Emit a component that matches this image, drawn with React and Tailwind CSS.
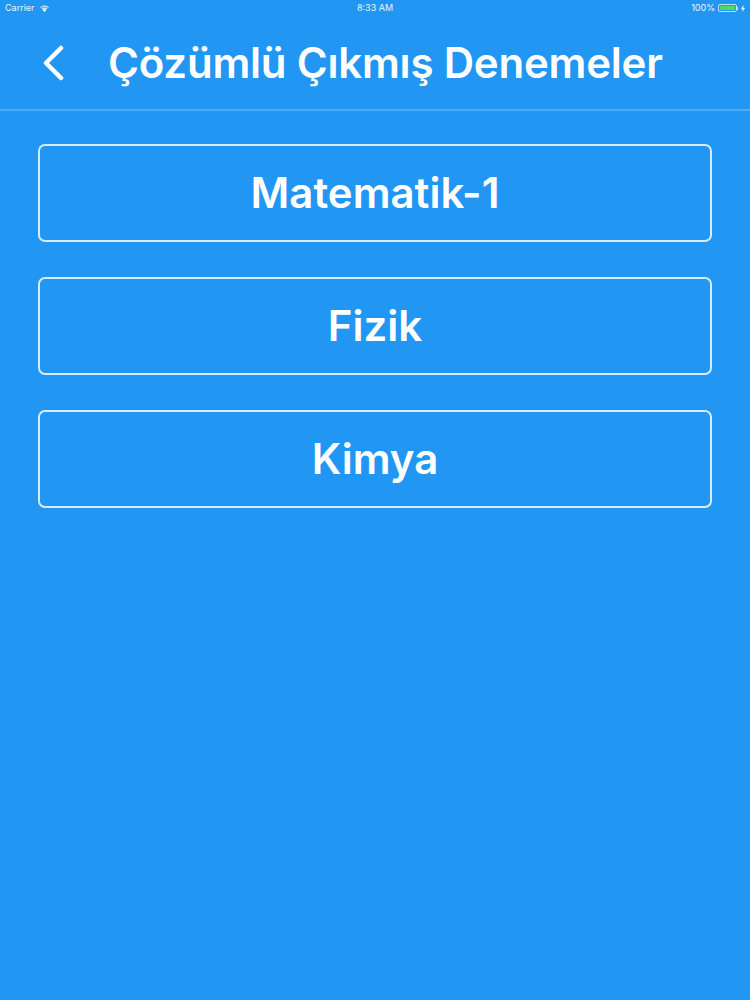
import React from "react";

const subjects = ["Matematik-1", "Fizik", "Kimya"];

function StatusBar() {
  return (
    <div className="relative flex h-[16px] items-center justify-between px-[5px] text-[9px] text-white/90">
      <div className="flex items-center gap-[4px]">
        <span>Carrier</span>
        <svg width="11" height="8" viewBox="0 0 11 8" fill="white">
          <path d="M5.5 8 L3.6 5.9 A2.8 2.8 0 0 1 7.4 5.9 Z" />
          <path d="M2.6 4.8 A4.3 4.3 0 0 1 8.4 4.8 L7.7 5.5 A3.3 3.3 0 0 0 3.3 5.5 Z" />
          <path d="M1.2 3.3 A6.3 6.3 0 0 1 9.8 3.3 L9.1 4.0 A5.3 5.3 0 0 0 1.9 4.0 Z" />
        </svg>
      </div>
      <span className="absolute left-1/2 -translate-x-1/2">8:33 AM</span>
      <div className="flex items-center gap-[3px]">
        <span>100%</span>
        <div className="flex items-center">
          <div className="h-[8px] w-[19px] rounded-[2px] border border-white/70 p-[1px]">
            <div className="h-full w-full rounded-[1px] bg-[#4cd964]" />
          </div>
          <div className="h-[3px] w-[1px] bg-white/70" />
        </div>
        <svg width="4" height="7" viewBox="0 0 4 7" fill="white">
          <path d="M2.5 0 L0 4 H1.7 L1.3 7 L4 3 H2.3 Z" />
        </svg>
      </div>
    </div>
  );
}

export default function App() {
  return (
    <div
      className="min-h-[1000px] w-[750px] bg-[#2196f3] text-white"
      style={{ fontFamily: 'Inter, "Open Sans", "Liberation Sans", sans-serif' }}
    >
      <StatusBar />

      {/* Nav bar */}
      <div className="flex h-[95px] items-center border-b-2 border-[#4aabf6]">
        <button className="ml-[40px] flex h-[40px] w-[30px] items-center">
          <svg width="26" height="36" viewBox="0 0 26 36" fill="none">
            <path d="M21 3 L6 18 L21 33" stroke="white" strokeWidth="4.5" strokeLinecap="round" strokeLinejoin="round" />
          </svg>
        </button>
        <h1 className="ml-[38px] text-[42px] font-semibold tracking-[-0.2px] leading-none">
          Çözümlü Çıkmış Denemeler
        </h1>
      </div>

      {/* List */}
      <div className="flex flex-col gap-[35px] px-[38px] pt-[33px]">
        {subjects.map((s) => (
          <button
            key={s}
            className="flex h-[98px] items-center justify-center rounded-[7px] border-2 border-[#d8ecfd] text-[42px] font-semibold leading-none"
          >
            {s}
          </button>
        ))}
      </div>
    </div>
  );
}
